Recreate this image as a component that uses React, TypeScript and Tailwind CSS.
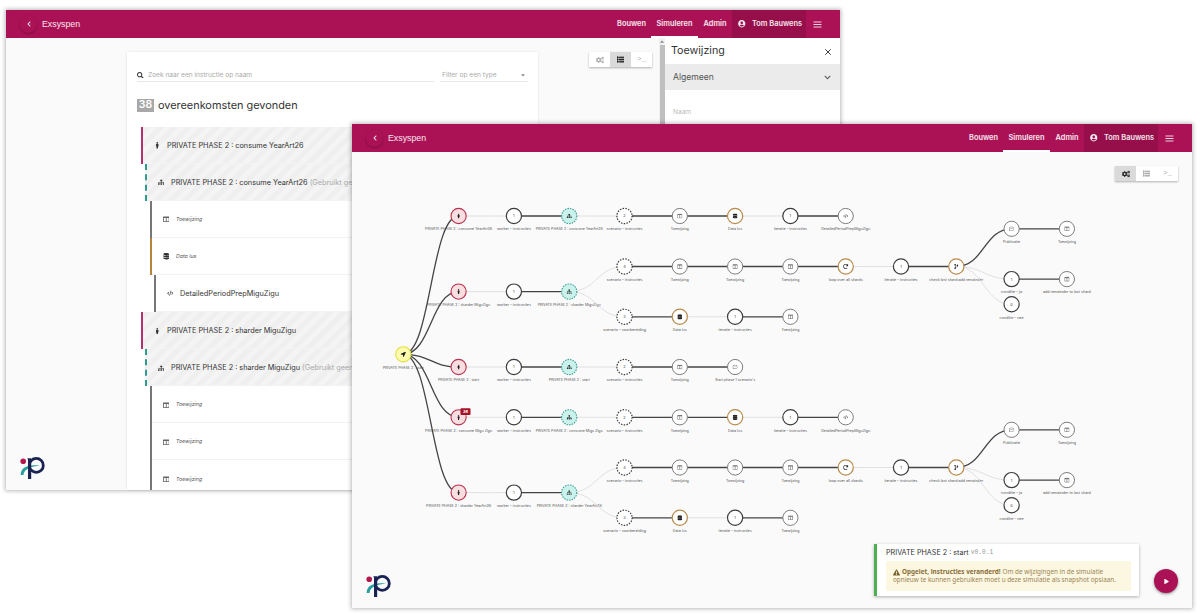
import { ReactNode } from 'react'
import { IconType } from 'react-icons'
import { X } from 'lucide-react'
import {
    FaCaretDown,
    FaCaretUp,
    FaChevronDown,
    FaChevronLeft,
    FaCode,
    FaCodeBranch,
    FaCogs,
    FaColumns,
    FaDatabase,
    FaExclamationTriangle,
    FaList,
    FaLocationArrow,
    FaMale,
    FaPlay,
    FaRedo,
    FaRegCommentDots,
    FaSearch,
    FaSitemap,
    FaUserCircle,
} from 'react-icons/fa'

type Kind = 'root' | 'actor' | 'step' | 'group' | 'scenario' | 'plain' | 'loop'

interface GraphNode {
    id: string
    x: number
    y: number
    kind: Kind
    label: string
    width: number
    icon?: IconType
    count?: string
    parent?: string
    soft?: boolean
}

const col = (n: number) => 403.3 + n * 55.3

const styles: Record<Kind, { fill: string; stroke: string; dash?: string; w: number }> = {
    root: { fill: '#fdfcae', stroke: '#e3df3c', w: 1.1 },
    actor: { fill: '#f8dde1', stroke: '#b8324b', w: 1.1 },
    step: { fill: '#ffffff', stroke: '#3c3c3c', w: 1.2 },
    group: { fill: '#c9f2ec', stroke: '#3c9a91', dash: '1.5 1.1', w: 1.1 },
    scenario: { fill: '#ffffff', stroke: '#3c3c3c', dash: '1.5 1.3', w: 1.2 },
    plain: { fill: '#ffffff', stroke: '#7d7d7d', w: 1 },
    loop: { fill: '#ffffff', stroke: '#b98a4b', w: 1.2 },
}

// Every branch starts with the same three nodes: actor, worker and group.
function head(id: string, y: number, name: string, width: number): GraphNode[] {
    return [
        { id: `${id}a`, x: col(1), y, kind: 'actor', label: name, width, icon: FaMale, parent: 'root' },
        { id: `${id}w`, x: col(2), y, kind: 'step', label: 'worker – instructies', width: 34, count: '1', parent: `${id}a`, soft: true },
        { id: `${id}g`, x: col(3), y, kind: 'group', label: name, width, icon: FaSitemap, parent: `${id}w` },
    ]
}

function scenario(id: string, parent: string, y: number, count: string, label = 'scenario – instructies', width = 36): GraphNode {
    return { id, x: col(4), y, kind: 'scenario', label, width, count, parent, soft: true }
}

function assign(id: string, c: number, y: number, parent: string): GraphNode {
    return { id, x: col(c), y, kind: 'plain', label: 'Toewijzing', width: 18, icon: FaColumns, parent }
}

function consume(id: string, y: number, name: string): GraphNode[] {
    return [
        ...head(id, y, name, 67),
        scenario(`${id}s`, `${id}g`, y, '2'),
        assign(`${id}1`, 5, y, `${id}s`),
        { id: `${id}2`, x: col(6), y, kind: 'loop', label: 'Data lus', width: 14, icon: FaDatabase, parent: `${id}1` },
        { id: `${id}3`, x: col(7), y, kind: 'step', label: 'iteratie – instructies', width: 33, count: '1', parent: `${id}2`, soft: true },
        { id: `${id}4`, x: col(8), y, kind: 'plain', label: 'DetailedPeriodPrepMiguZigu', width: 49, icon: FaCode, parent: `${id}3` },
    ]
}

function shard(id: string, y: number, name: string, width: number): GraphNode[] {
    const top = y - 25.1
    const low = y + 25.2
    return [
        ...head(id, y, name, width),
        scenario(`${id}s`, `${id}g`, top, '4'),
        assign(`${id}1`, 5, top, `${id}s`),
        assign(`${id}2`, 6, top, `${id}1`),
        assign(`${id}3`, 7, top, `${id}2`),
        { id: `${id}4`, x: col(8), y: top, kind: 'loop', label: 'loop over all shards', width: 34, icon: FaRedo, parent: `${id}3` },
        { id: `${id}5`, x: col(9), y: top, kind: 'step', label: 'iteratie – instructies', width: 33, count: '1', parent: `${id}4`, soft: true },
        { id: `${id}6`, x: col(10), y: top, kind: 'loop', label: 'check last shard:add remainder', width: 54, icon: FaCodeBranch, parent: `${id}5` },
        { id: `${id}7`, x: col(11), y: top - 37.7, kind: 'plain', label: 'Publicatie', width: 17, icon: FaRegCommentDots, parent: `${id}6` },
        assign(`${id}8`, 12, top - 37.7, `${id}7`),
        { id: `${id}9`, x: col(11), y: top + 12.6, kind: 'step', label: 'conditie – ja', width: 21, count: '1', parent: `${id}6`, soft: true },
        { id: `${id}10`, x: col(12), y: top + 12.6, kind: 'plain', label: 'add remainder to last shard', width: 48, icon: FaColumns, parent: `${id}9` },
        { id: `${id}11`, x: col(11), y: top + 37.8, kind: 'step', label: 'conditie – nee', width: 24, count: '0', parent: `${id}6`, soft: true },
        scenario(`${id}v`, `${id}g`, low, '3', 'scenario – voorbereiding', 43),
        { id: `${id}12`, x: col(5), y: low, kind: 'loop', label: 'Data lus', width: 14, icon: FaDatabase, parent: `${id}v` },
        { id: `${id}13`, x: col(6), y: low, kind: 'step', label: 'iteratie – instructies', width: 33, count: '1', parent: `${id}12`, soft: true },
        assign(`${id}14`, 7, low, `${id}13`),
    ]
}

const nodes: GraphNode[] = [
    { id: 'root', x: col(0), y: 354.3, kind: 'root', label: 'PRIVATE PHASE 2 : start', width: 41, icon: FaLocationArrow },
    ...consume('a', 216, 'PRIVATE PHASE 2 : consume YearArt26'),
    ...shard('b', 291.6, 'PRIVATE PHASE 2 : sharder MiguZigu', 63),
    ...head('c', 367, 'PRIVATE PHASE 2 : start', 41),
    scenario('cs', 'cg', 367, '2'),
    assign('c1', 5, 367, 'cs'),
    { id: 'c2', x: col(6), y: 367, kind: 'plain', label: "Start phase 1 scenario's", width: 40, icon: FaRegCommentDots, parent: 'c1' },
    ...consume('d', 417.3, 'PRIVATE PHASE 2 : consume Migu Zigu'),
    ...shard('e', 492.6, 'PRIVATE PHASE 2 : sharder YearArt26', 65),
]

const byId = new Map(nodes.map((n) => [n.id, n]))

function Graph() {
    return (
        <svg className="block h-[456px] w-[840px]" viewBox="352 152 840 456" fontFamily="Inter, 'Open Sans', sans-serif">
            {nodes.map((n) => (
                <text key={n.id} x={n.x} y={n.y + 14.2} fontSize="3.6" fill="#555" textAnchor="middle" textLength={n.width} lengthAdjust="spacingAndGlyphs">
                    {n.label}
                </text>
            ))}
            {nodes.map((n) => {
                const p = n.parent && byId.get(n.parent)
                if (!p) return null
                const mid = (p.x + n.x) / 2
                return (
                    <path
                        key={n.id}
                        d={`M${p.x},${p.y}C${mid},${p.y} ${mid},${n.y} ${n.x},${n.y}`}
                        fill="none"
                        stroke={n.soft ? '#dcdcdc' : '#444'}
                        strokeWidth={n.soft ? 0.9 : 1.3}
                    />
                )
            })}
            {nodes.map((n) => {
                const s = styles[n.kind]
                const Icon = n.icon
                return (
                    <g key={n.id}>
                        <circle cx={n.x} cy={n.y} r="7.6" fill={s.fill} stroke={s.stroke} strokeWidth={s.w} strokeDasharray={s.dash} />
                        {Icon && <Icon x={n.x - 2.6} y={n.y - 2.6} size={5.2} color={n.kind === 'plain' ? '#777' : '#222'} />}
                        {n.count && (
                            <text x={n.x} y={n.y + 1.4} fontSize="3.9" fill="#444" textAnchor="middle">
                                {n.count}
                            </text>
                        )}
                    </g>
                )
            })}
            <rect x="460.5" y="408.3" width="10" height="6.8" rx="0.8" fill="#a51226" />
            <text x="465.5" y="413.2" fontSize="4" fontWeight="700" fill="#fff" textAnchor="middle">
                38
            </text>
        </svg>
    )
}

function Logo() {
    return (
        <svg className="absolute bottom-[10px] left-[14px] h-[24px] w-[26px]" viewBox="0 0 26 24">
            <circle cx="3.2" cy="5.2" r="2.8" fill="#b5174f" />
            <path d="M0.7 19C0.5 12.5 6 7.8 20 9.6C11 10.8 4.5 12.5 3.4 19Z" fill="#2a9d9d" />
            <path d="M7.4 2.2H11.2V23H8V4Z" fill="#1a2353" />
            <circle cx="16.3" cy="9.4" r="7" fill="none" stroke="#1a2353" strokeWidth="2.8" />
        </svg>
    )
}

function Header() {
    return (
        <header className="flex h-7 items-stretch bg-[#ab1256] text-[7.4px] font-semibold text-white/90">
            <div className="flex flex-1 items-center pl-[14px]">
                <div className="flex size-[17px] items-center justify-center rounded-full shadow-[0_1px_2px_rgba(0,0,0,0.3)]">
                    <FaChevronLeft className="size-[6px]" />
                </div>
                <span className="ml-[5px] font-['Liberation_Sans'] text-[8.8px] font-normal">Exsyspen</span>
            </div>
            <nav className="flex">
                <span className="flex w-[39px] items-center justify-center">Bouwen</span>
                <span className="flex w-[47px] items-center justify-center border-y-2 border-t-transparent border-b-white">Simuleren</span>
                <span className="flex w-[34px] items-center justify-center">Admin</span>
            </nav>
            <div className="flex w-[74px] items-center bg-[#960e4a] pl-[6px]">
                <FaUserCircle className="size-[7.5px]" />
                <span className="ml-[6.5px] whitespace-nowrap">Tom Bauwens</span>
            </div>
            <div className="flex w-[34px] items-center pl-[7px]">
                <svg className="h-[7px] w-[9px]" viewBox="0 0 9 7" stroke="currentColor" strokeWidth="0.9">
                    <path d="M0.5 1H8.5M0.5 3.5H8.5M0.5 6H8.5" />
                </svg>
            </div>
        </header>
    )
}

function ViewSwitch({ active }: { active: 'graph' | 'list' }) {
    return (
        <div className="flex h-[15px] w-[63px] bg-white text-[#aaa] shadow-[0_1px_2px_rgba(0,0,0,0.3)]">
            <span className={active === 'graph' ? 'flex flex-1 items-center justify-center bg-[#dadada] text-[#222]' : 'flex flex-1 items-center justify-center'}>
                <FaCogs className="size-[8px]" />
            </span>
            <span className={active === 'list' ? 'flex flex-1 items-center justify-center bg-[#dadada] text-[#222]' : 'flex flex-1 items-center justify-center'}>
                <FaList className="size-[7px]" stroke="currentColor" strokeWidth="40" />
            </span>
            <span className="flex flex-1 items-center justify-center font-['Liberation_Mono'] text-[7px]">&gt;_</span>
        </div>
    )
}

function Window({ className, children }: { className: string; children: ReactNode }) {
    return (
        <section className={`absolute flex flex-col bg-[#fafafa] shadow-[0_0_4px_1px_rgba(0,0,0,0.28)] ${className}`}>
            <Header />
            {children}
            <Logo />
        </section>
    )
}

const rows: { level: number; icon: IconType; text: string; note?: string; loop?: boolean }[] = [
    { level: 0, icon: FaMale, text: 'PRIVATE PHASE 2 : consume YearArt26' },
    { level: 1, icon: FaSitemap, text: 'PRIVATE PHASE 2 : consume YearArt26', note: '(Gebruikt geen data)' },
    { level: 2, icon: FaColumns, text: 'Toewijzing' },
    { level: 2, icon: FaDatabase, text: 'Data lus', loop: true },
    { level: 3, icon: FaCode, text: 'DetailedPeriodPrepMiguZigu' },
    { level: 0, icon: FaMale, text: 'PRIVATE PHASE 2 : sharder MiguZigu' },
    { level: 1, icon: FaSitemap, text: 'PRIVATE PHASE 2 : sharder MiguZigu', note: '(Gebruikt geen data)' },
    { level: 2, icon: FaColumns, text: 'Toewijzing' },
    { level: 2, icon: FaColumns, text: 'Toewijzing' },
    { level: 2, icon: FaColumns, text: 'Toewijzing' },
]

const rowStyles = [
    'border-[#b5306f] bg-[repeating-linear-gradient(135deg,#efefef_0_5px,#f4f4f4_5px_10px)]',
    'ml-[4px] border-dashed border-[#2f9a8f] bg-[repeating-linear-gradient(135deg,#efefef_0_5px,#f4f4f4_5px_10px)]',
    'ml-[9px] border-[#777]',
    'ml-[13px] border-[#777]',
]

function InstructionList() {
    return (
        <div className="ml-[121px] mt-[14px] flex w-[411px] flex-col overflow-hidden bg-white px-[10px] shadow-[0_0_2px_rgba(0,0,0,0.12)]">
            <div className="mt-[15px] flex h-[15px] shrink-0 gap-[6px] text-[6.6px] text-[#aaa]">
                <div className="flex w-[297px] items-center border-b border-[#e8e8e8] pt-[2px]">
                    <FaSearch className="size-[6.5px] text-[#333]" />
                    <span className="ml-[4.5px]">Zoek naar een instructie op naam</span>
                </div>
                <div className="flex flex-1 items-center justify-between border-b border-[#e8e8e8] px-[2px] pt-[2px]">
                    <span>Filter op een type</span>
                    <FaCaretDown className="size-[6px] text-[#888]" />
                </div>
            </div>
            <div className="mt-[16.5px] flex h-[14px] shrink-0 items-center text-[10.9px] text-[#333]">
                <span className="flex h-[13px] w-[17px] items-center justify-center bg-[#a8a8a8] text-[10.5px] font-semibold text-white">38</span>
                <span className="ml-[4px]">overeenkomsten gevonden</span>
            </div>
            <div className="mt-[14px] ml-[4px] flex flex-col">
                {rows.map((row, i) => (
                    <div key={i} className={`flex h-[37.1px] shrink-0 items-center border-l-2 text-[7.3px] text-[#333] ${row.loop ? 'ml-[9px] border-[#b5843f]' : rowStyles[row.level]}`}>
                        <div className="flex h-full flex-1 items-center border-b border-[#f3f3f3] pt-[1.5px] pl-[10.5px]">
                            <row.icon className={row.icon === FaCode || row.icon === FaColumns ? 'size-[6.5px] text-[#666]' : 'size-[6.5px]'} />
                            {row.level === 2 ? (
                                <span className="ml-[7px] text-[5.2px] text-[#555] italic">{row.text}</span>
                            ) : (
                                <span className="ml-[7px] whitespace-nowrap">
                                    {row.text} {row.note && <span className="text-[#aaa]">{row.note}</span>}
                                </span>
                            )}
                        </div>
                    </div>
                ))}
            </div>
        </div>
    )
}

function DetailPanel() {
    return (
        <aside className="flex w-[181px]">
            <div className="flex w-[6px] flex-col items-center bg-[#f1f1f1]">
                <FaCaretUp className="h-[7px] w-[4px] text-[#888]" />
                <div className="w-[5px] flex-1 bg-[#bfbfbf]" />
            </div>
            <div className="flex-1 bg-white text-[#555]">
                <div className="flex h-[26px] items-center justify-between pt-px pr-[7px] pl-[6px] text-[10.7px] text-[#333]">
                    Toewijzing
                    <X className="size-[10px]" strokeWidth={2.2} />
                </div>
                <div className="flex h-[26px] items-center justify-between bg-[#ebebeb] pr-[9px] pl-[8px] text-[8.6px]">
                    Algemeen
                    <FaChevronDown className="size-[7px]" />
                </div>
                <div className="mt-[18.5px] pl-[8px] text-[6.6px] text-[#bbb]">Naam</div>
            </div>
        </aside>
    )
}

export default function App() {
    return (
        <div className="relative h-[615px] w-[1200px] overflow-hidden bg-white font-['Inter','Open_Sans',sans-serif] leading-none">
            <Window className="top-[10px] left-[6px] h-[480px] w-[834px]">
                <div className="flex min-h-0 flex-1">
                    <InstructionList />
                    <div className="mt-[14px] mr-[7px] ml-auto">
                        <ViewSwitch active="list" />
                    </div>
                    <DetailPanel />
                </div>
            </Window>

            <Window className="top-[124px] left-[352px] h-[484px] w-[840px]">
                <Graph />
                <div className="absolute top-[42px] right-[14px]">
                    <ViewSwitch active="graph" />
                </div>
                <div className="absolute right-[53px] bottom-[12px] h-[52px] w-[265px] border-l-[3px] border-[#4caf50] bg-white pr-[8px] pl-[9px] shadow-[0_1px_3px_rgba(0,0,0,0.3)]">
                    <div className="flex h-[17px] items-center text-[7.2px] text-[#333]">
                        PRIVATE PHASE 2 : start
                        <span className="mt-px ml-[2px] font-['Liberation_Mono'] text-[6.3px] text-[#999]">v0.0.1</span>
                    </div>
                    <div className="h-[30px] bg-[#fcf7e0] px-[7px] pt-[7px] font-['Noto_Sans'] text-[6.35px] leading-[8px] whitespace-nowrap text-[#9a8456]">
                        <div className="flex items-center">
                            <FaExclamationTriangle className="mr-[2px] size-[7px] text-[#7d6330]" />
                            <b className="mr-[2px] text-[#8a6d3b]">Opgelet, instructies veranderd!</b> Om de wijzigingen in de simulatie
                        </div>
                        <div>opnieuw te kunnen gebruiken moet u deze simulatie als snapshot opslaan.</div>
                    </div>
                </div>
                <button className="absolute right-[14px] bottom-[15px] flex size-[24px] items-center justify-center rounded-full bg-[#ab1256] text-white shadow-[0_1px_3px_rgba(0,0,0,0.45)]">
                    <FaPlay className="size-[5px]" />
                </button>
            </Window>
        </div>
    )
}
